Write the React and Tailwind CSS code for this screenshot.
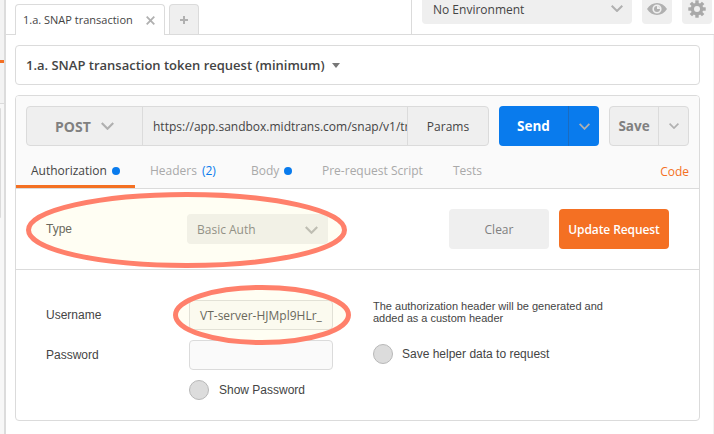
const Chevron = ({ w = 12, h = 7, className = "text-[#b0b0b0]", sw = 2 }) => (
  <svg width={w} height={h} viewBox="0 0 12 7" fill="none" stroke="currentColor" strokeWidth={sw} className={`shrink-0 ${className}`}>
    <path d="M0.7 0.7 6 6 11.3 0.7" />
  </svg>
);

const Dot = () => <span className="h-2 w-2 shrink-0 rounded-full bg-[#097bed]" />;

const Eye = () => (
  <svg width="20" height="12" viewBox="0 0 20 12" className="text-[#b0b0b0]">
    <path fill="currentColor" fillRule="evenodd" d="M0 6C2.3 2.2 6 0 10 0s7.700 2.200 10 6c-2.300 3.800-6 6-10 6S2.300 9.800 0 6Zm10-4.600a4.600 4.600 0 1 0 0 9.200a4.600 4.600 0 0 0 0-9.200Z" />
    <circle cx="10" cy="6" r="3" fill="currentColor" />
    <path d="M10 3v3h3A3 3 0 0 0 10 3Z" fill="#efefef" />
  </svg>
);

const Gear = () => (
  <svg width="18" height="18" viewBox="-9 -9 18 18" className="text-[#a9a9a9]">
    {[0, 45, 90, 135].map((a) => (
      <rect key={a} x="-1.700" y="-8.700" width="3.400" height="17.400" fill="currentColor" transform={`rotate(${a})`} />
    ))}
    <circle r="6.300" fill="currentColor" />
    <circle r="3" fill="#efefef" />
  </svg>
);

const Ring = ({ w, h, className }) => (
  <svg width={w} height={h} viewBox={`0 0 ${w} ${h}`} className={`pointer-events-none absolute ${className}`}>
    <ellipse cx={w / 2} cy={h / 2} rx={w / 2 - 2.5} ry={h / 2 - 2.5} fill="#fff8c3" fillOpacity="0.2" stroke="#ff806b" strokeWidth="5" />
  </svg>
);

const Radio = () => <span className="h-5 w-5 shrink-0 rounded-full border border-[#b8b8b8] bg-[#dcdcdc]" />;

function TopBar() {
  return (
    <header className="flex h-[35px] border-b border-[#dbdbdb] pl-[9px]">
      <div className="mt-1 mr-[4px] flex h-[31px] w-[150px] shrink-0 items-center justify-between rounded-t border border-b-0 border-[#dbdbdb] bg-white pr-[9px] pl-[7px] text-[11px]">
        <span className="whitespace-nowrap">1.a. SNAP transaction</span>
        <svg width="9" height="9" viewBox="0 0 9 9" stroke="#b0b0b0" strokeWidth="1.800">
          <path d="M.7.7l7.600 7.600M8.300.7.7 8.300" />
        </svg>
      </div>
      <div className="mt-1 flex h-[30px] w-[30px] items-center justify-center rounded-t border border-b-0 border-[#dbdbdb] bg-[#efefef]">
        <svg width="8" height="8" viewBox="0 0 8 8" stroke="#b0b0b0" strokeWidth="2">
          <path d="M4 0v8M0 4h8" />
        </svg>
      </div>
      <div className="ml-auto flex h-[34px] w-[303px] items-start gap-2.5 border-l border-[#dbdbdb] pl-[10px]">
        <div className="flex h-6 w-[210px] shrink-0 items-start justify-between rounded-b bg-[#efefef] pr-[9px] pl-[11px]">
          <span className="text-[12px] leading-[19px]">No Environment</span>
          <Chevron className="mt-[5px] text-[#b0b0b0]" />
        </div>
        <div className="flex h-6 w-[30px] shrink-0 justify-center rounded-b bg-[#efefef] pt-[3px]">
          <Eye />
        </div>
        <div className="flex h-6 w-[30px] shrink-0 justify-center rounded-b bg-[#efefef]">
          <Gear />
        </div>
      </div>
    </header>
  );
}

function UrlRow() {
  return (
    <div className="flex h-10 text-[12px]">
      <div className="flex w-[463px] overflow-hidden rounded border border-[#dbdbdb] bg-[#efefef]">
        <div className="flex w-[116px] shrink-0 items-center border-r border-[#dbdbdb] pl-[28px] text-[14px] font-bold text-[#808080]">
          <span className="w-[46px]">POST</span>
          <Chevron w={13} h={8} />
        </div>
        <div className="flex w-[265px] shrink-0 items-center overflow-hidden border-r border-[#dbdbdb] pt-px pl-[10px] whitespace-nowrap">
          https://app.sandbox.midtrans.com/snap/v1/tr
        </div>
        <div className="flex flex-1 items-center justify-center pt-px">Params</div>
      </div>
      <div className="ml-2.5 flex w-[100px] rounded bg-[#097bed] text-[13.5px] font-bold text-white">
        <div className="flex w-[69px] items-center justify-center">Send</div>
        <div className="flex flex-1 items-center justify-center border-l border-[#1a6bc0]">
          <Chevron w={11} h={7} />
        </div>
      </div>
      <div className="ml-2.5 flex w-20 rounded border border-[#dbdbdb] bg-[#efefef] text-[13.5px] font-bold text-[#808080]">
        <div className="flex w-12 items-center justify-center">Save</div>
        <div className="flex flex-1 items-center justify-center border-l border-[#dbdbdb]">
          <Chevron w={10} h={6} />
        </div>
      </div>
    </div>
  );
}

function Tabs() {
  return (
    <nav className="flex h-[35px] text-[12px] text-[#a9a9a9]">
      <div className="flex h-full w-[119px] items-center gap-[5px] border-b-3 border-[#f47023] pt-[3px] pl-[15px] text-[#444]">
        <span>Authorization</span>
        <Dot />
      </div>
      <div className="flex h-8 w-[101px] items-center gap-[5px] pt-[3px] pl-[15px]">
        Headers <span className="text-[#097bed]">(2)</span>
      </div>
      <div className="flex h-8 w-[71px] items-center gap-[5px] pt-[3px] pl-[15px]">
        <span>Body</span>
        <Dot />
      </div>
      <div className="flex h-8 w-[131px] items-center pt-[3px] pl-[15px]">Pre-request Script</div>
      <div className="flex h-8 items-center pt-[3px] pl-[15px]">Tests</div>
      <div className="mr-[10px] ml-auto flex h-[38px] items-center text-[#f47023]">Code</div>
    </nav>
  );
}

export default function App() {
  return (
    <div className="flex h-[434px] w-[714px] overflow-hidden bg-white font-['Open_Sans',sans-serif] text-[#444]">
      <aside className="flex w-[6px] shrink-0 flex-col border-r-2 border-[#dcdcdc] bg-[#f7f7f7]">
        <div className="h-[60px] bg-[#f3f3f3]" />
        <div className="h-[3px] bg-[#f47023]" />
        <div className="h-10 bg-[#f3f3f3]" />
        <div className="h-px bg-[#dbdbdb]" />
        <div className="mt-1 h-[110px] w-px rounded-r bg-[#dbdbdb]" />
      </aside>
      <main className="flex w-[708px] flex-col">
        <TopBar />
        <div className="flex flex-1 flex-col border-r border-[#f3f3f3] pl-[9px]">
          <div className="mt-[10px] flex h-10 w-[685px] items-center rounded border border-[#dbdbdb] pt-px pl-[10px] text-[13px] font-semibold">
            1.a. SNAP transaction token request (minimum)
            <span className="ml-[7px] border-x-[4.5px] border-t-[5px] border-x-transparent border-t-[#777]" />
          </div>
          <section className="mt-[10px] h-[326px] w-[685px] overflow-hidden rounded border border-[#dbdbdb]">
            <div className="h-[93px] border-b border-[#dbdbdb] bg-[#fafafa]">
              <div className="px-[10px] pt-[10px]">
                <UrlRow />
              </div>
              <div className="pt-[7px]">
                <Tabs />
              </div>
            </div>
            <div className="relative flex h-[81px] items-center border-b border-[#dbdbdb] pl-[30px]">
              <div className="w-[141px] font-['Liberation_Sans',sans-serif] text-[12px]">Type</div>
              <div className="flex h-[30px] w-[141px] items-center justify-between rounded bg-[#efefef] pt-px pr-[10px] pl-[10px] text-[12px] text-[#777]">
                Basic Auth
                <Chevron w={13} h={8} />
              </div>
              <div className="ml-[121px] flex h-10 w-[100px] items-center justify-center rounded bg-[#efefef] pt-px text-[12px] text-[#808080]">Clear</div>
              <div className="ml-2.5 flex h-10 w-[110px] items-center justify-center rounded bg-[#f47023] pt-px text-[12px] font-semibold tracking-[-0.1px] whitespace-nowrap text-white">Update Request</div>
              <Ring w={321} h={76} className="top-[3px] left-[10px]" />
            </div>
            <div className="relative flex pt-[30px] pl-[30px] font-['Liberation_Sans',sans-serif] text-[12px]">
              <div className="w-[143px]">
                <div className="h-10 leading-[30px]">Username</div>
                <div className="leading-[30px]">Password</div>
              </div>
              <div className="flex w-[184px] flex-col gap-[10px]">
                <div className="flex h-[30px] w-[144px] items-center rounded border border-[#dbdbdb] bg-[#fafafa] pt-px pl-[10px] font-['Open_Sans',sans-serif] text-[12px] whitespace-nowrap">VT-server-HJMpl9HLr_</div>
                <div className="h-[30px] w-[144px] rounded border border-[#dbdbdb] bg-[#fafafa]" />
                <div className="flex h-5 items-center gap-[10px]">
                  <Radio />
                  Show Password
                </div>
              </div>
              <div>
                <p className="text-[11px] leading-[12px] whitespace-nowrap">
                  The authorization header will be generated and
                  <br />
                  added as a custom header
                </p>
                <div className="mt-[20px] flex h-5 items-center gap-[9px]">
                  <Radio />
                  Save helper data to request
                </div>
              </div>
              <Ring w={178} h={60} className="top-[15px] left-[156.5px]" />
            </div>
          </section>
        </div>
      </main>
    </div>
  );
}
